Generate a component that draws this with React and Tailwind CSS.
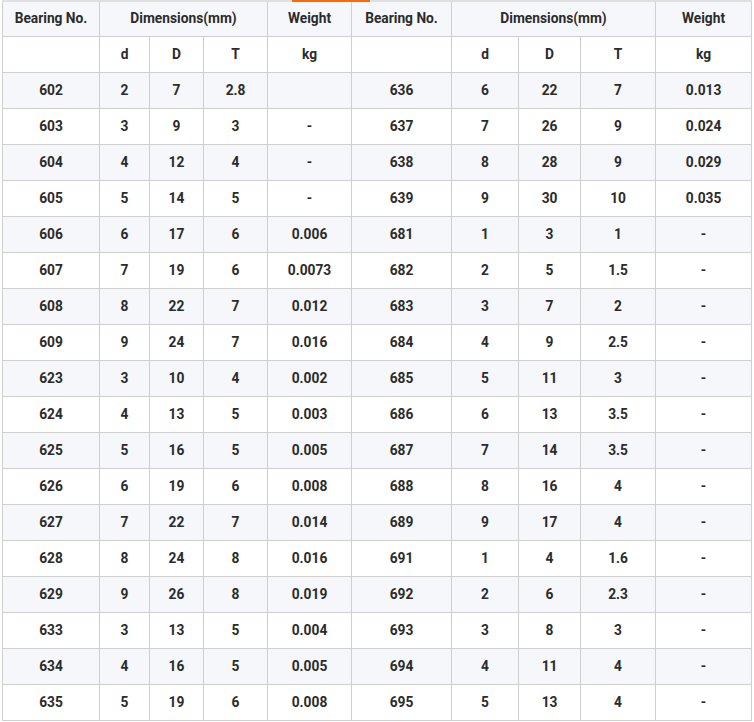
const rows = [
  ["602", "2", "7", "2.8", "", "636", "6", "22", "7", "0.013"],
  ["603", "3", "9", "3", "-", "637", "7", "26", "9", "0.024"],
  ["604", "4", "12", "4", "-", "638", "8", "28", "9", "0.029"],
  ["605", "5", "14", "5", "-", "639", "9", "30", "10", "0.035"],
  ["606", "6", "17", "6", "0.006", "681", "1", "3", "1", "-"],
  ["607", "7", "19", "6", "0.0073", "682", "2", "5", "1.5", "-"],
  ["608", "8", "22", "7", "0.012", "683", "3", "7", "2", "-"],
  ["609", "9", "24", "7", "0.016", "684", "4", "9", "2.5", "-"],
  ["623", "3", "10", "4", "0.002", "685", "5", "11", "3", "-"],
  ["624", "4", "13", "5", "0.003", "686", "6", "13", "3.5", "-"],
  ["625", "5", "16", "5", "0.005", "687", "7", "14", "3.5", "-"],
  ["626", "6", "19", "6", "0.008", "688", "8", "16", "4", "-"],
  ["627", "7", "22", "7", "0.014", "689", "9", "17", "4", "-"],
  ["628", "8", "24", "8", "0.016", "691", "1", "4", "1.6", "-"],
  ["629", "9", "26", "8", "0.019", "692", "2", "6", "2.3", "-"],
  ["633", "3", "13", "5", "0.004", "693", "3", "8", "3", "-"],
  ["634", "4", "16", "5", "0.005", "694", "4", "11", "4", "-"],
  ["635", "5", "19", "6", "0.008", "695", "5", "13", "4", "-"],
];

const widths = [97, 50, 54, 64, 84, 100, 67, 62, 75, 96];

const cell = "border border-[#cfcfcf] text-center align-middle p-0";

export default function App() {
  return (
    <div className="pl-[2px] bg-white font-['Roboto',sans-serif] text-[13.75px] font-bold text-[#2b2b2b]">
      {/* tab strip line */}
      <div className="flex w-[750px] h-[2px]">
        <div className="w-[290px] bg-[#e0e0e0]" />
        <div className="w-[78px] bg-[#ff6a00]" />
        <div className="flex-1 bg-[#e0e0e0]" />
      </div>
      <table className="border-collapse table-fixed w-[750px] border-t-0">
        <colgroup>
          {widths.map((w, i) => (
            <col key={i} style={{ width: w }} />
          ))}
        </colgroup>
        <thead>
          <tr className="h-[34px] bg-[#f5f7fa]">
            <th className={cell + " border-t-0 font-bold"}>Bearing No.</th>
            <th colSpan={3} className={cell + " border-t-0 font-bold"}>Dimensions(mm)</th>
            <th className={cell + " border-t-0 font-bold"}>Weight</th>
            <th className={cell + " border-t-0 font-bold"}>Bearing No.</th>
            <th colSpan={3} className={cell + " border-t-0 font-bold"}>Dimensions(mm)</th>
            <th className={cell + " border-t-0 font-bold"}>Weight</th>
          </tr>
          <tr className="h-[36px] bg-white">
            <th className={cell}></th>
            <th className={cell + " font-bold"}>d</th>
            <th className={cell + " font-bold"}>D</th>
            <th className={cell + " font-bold"}>T</th>
            <th className={cell + " font-bold"}>kg</th>
            <th className={cell}></th>
            <th className={cell + " font-bold"}>d</th>
            <th className={cell + " font-bold"}>D</th>
            <th className={cell + " font-bold"}>T</th>
            <th className={cell + " font-bold"}>kg</th>
          </tr>
        </thead>
        <tbody>
          {rows.map((r, i) => (
            <tr key={i} className={"h-[36px] " + (i % 2 === 0 ? "bg-[#f5f7fa]" : "bg-white")}>
              {r.map((v, j) => (
                <td key={j} className={cell}>
                  {v}
                </td>
              ))}
            </tr>
          ))}
        </tbody>
      </table>
    </div>
  );
}
